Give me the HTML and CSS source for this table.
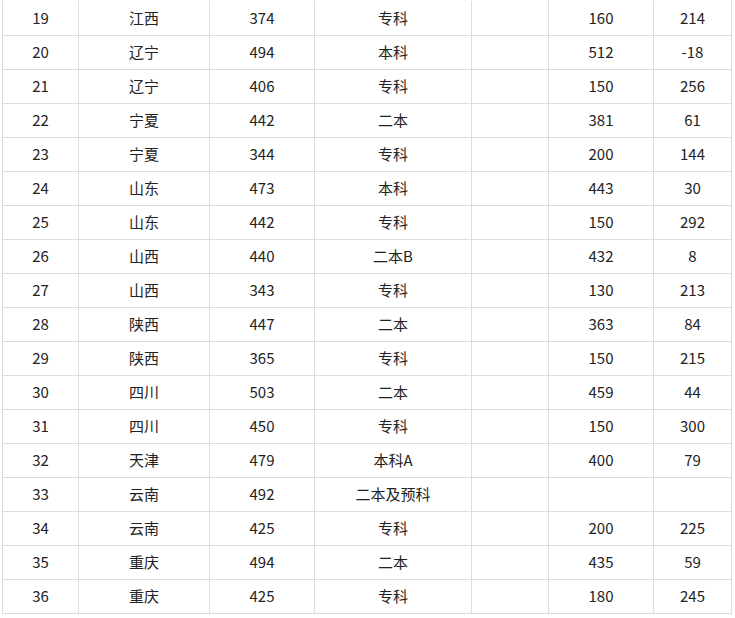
FILE: index.html
```html
<!DOCTYPE html>
<html>
<head>
<meta charset="utf-8">
<link rel="stylesheet" href="styles.css">
</head>
<body>
<table class="score-table">
  <colgroup>
    <col class="c1"><col class="c2"><col class="c3"><col class="c4"><col class="c5"><col class="c6"><col class="c7">
  </colgroup>
  <tbody>
    <tr><td>19</td><td>江西</td><td>374</td><td>专科</td><td></td><td>160</td><td>214</td></tr>
    <tr><td>20</td><td>辽宁</td><td>494</td><td>本科</td><td></td><td>512</td><td>-18</td></tr>
    <tr><td>21</td><td>辽宁</td><td>406</td><td>专科</td><td></td><td>150</td><td>256</td></tr>
    <tr><td>22</td><td>宁夏</td><td>442</td><td>二本</td><td></td><td>381</td><td>61</td></tr>
    <tr><td>23</td><td>宁夏</td><td>344</td><td>专科</td><td></td><td>200</td><td>144</td></tr>
    <tr><td>24</td><td>山东</td><td>473</td><td>本科</td><td></td><td>443</td><td>30</td></tr>
    <tr><td>25</td><td>山东</td><td>442</td><td>专科</td><td></td><td>150</td><td>292</td></tr>
    <tr><td>26</td><td>山西</td><td>440</td><td>二本B</td><td></td><td>432</td><td>8</td></tr>
    <tr><td>27</td><td>山西</td><td>343</td><td>专科</td><td></td><td>130</td><td>213</td></tr>
    <tr><td>28</td><td>陕西</td><td>447</td><td>二本</td><td></td><td>363</td><td>84</td></tr>
    <tr><td>29</td><td>陕西</td><td>365</td><td>专科</td><td></td><td>150</td><td>215</td></tr>
    <tr><td>30</td><td>四川</td><td>503</td><td>二本</td><td></td><td>459</td><td>44</td></tr>
    <tr><td>31</td><td>四川</td><td>450</td><td>专科</td><td></td><td>150</td><td>300</td></tr>
    <tr><td>32</td><td>天津</td><td>479</td><td>本科A</td><td></td><td>400</td><td>79</td></tr>
    <tr><td>33</td><td>云南</td><td>492</td><td>二本及预科</td><td></td><td></td><td></td></tr>
    <tr><td>34</td><td>云南</td><td>425</td><td>专科</td><td></td><td>200</td><td>225</td></tr>
    <tr><td>35</td><td>重庆</td><td>494</td><td>二本</td><td></td><td>435</td><td>59</td></tr>
    <tr><td>36</td><td>重庆</td><td>425</td><td>专科</td><td></td><td>180</td><td>245</td></tr>
  </tbody>
</table>
</body>
</html>
```
FILE: styles.css
```css
html, body {
  margin: 0;
  padding: 0;
  background: #ffffff;
}

.score-table {
  margin: 1px 0 0 2px;
  border-collapse: collapse;
  table-layout: fixed;
  width: 729px;
  font-family: "Noto Sans CJK SC", "Noto Sans", sans-serif;
  font-size: 15px;
  color: #222;
}

.c1 { width: 76px; }
.c2 { width: 131px; }
.c3 { width: 105px; }
.c4 { width: 157px; }
.c5 { width: 77px; }
.c6 { width: 105px; }
.c7 { width: 78px; }

.score-table td {
  border: 1px solid #dddddd;
  height: 34px;
  padding: 0;
  text-align: center;
  vertical-align: middle;
  line-height: 20px;
  box-sizing: border-box;
}

.score-table tr:first-child td {
  border-top: none;
}
```
